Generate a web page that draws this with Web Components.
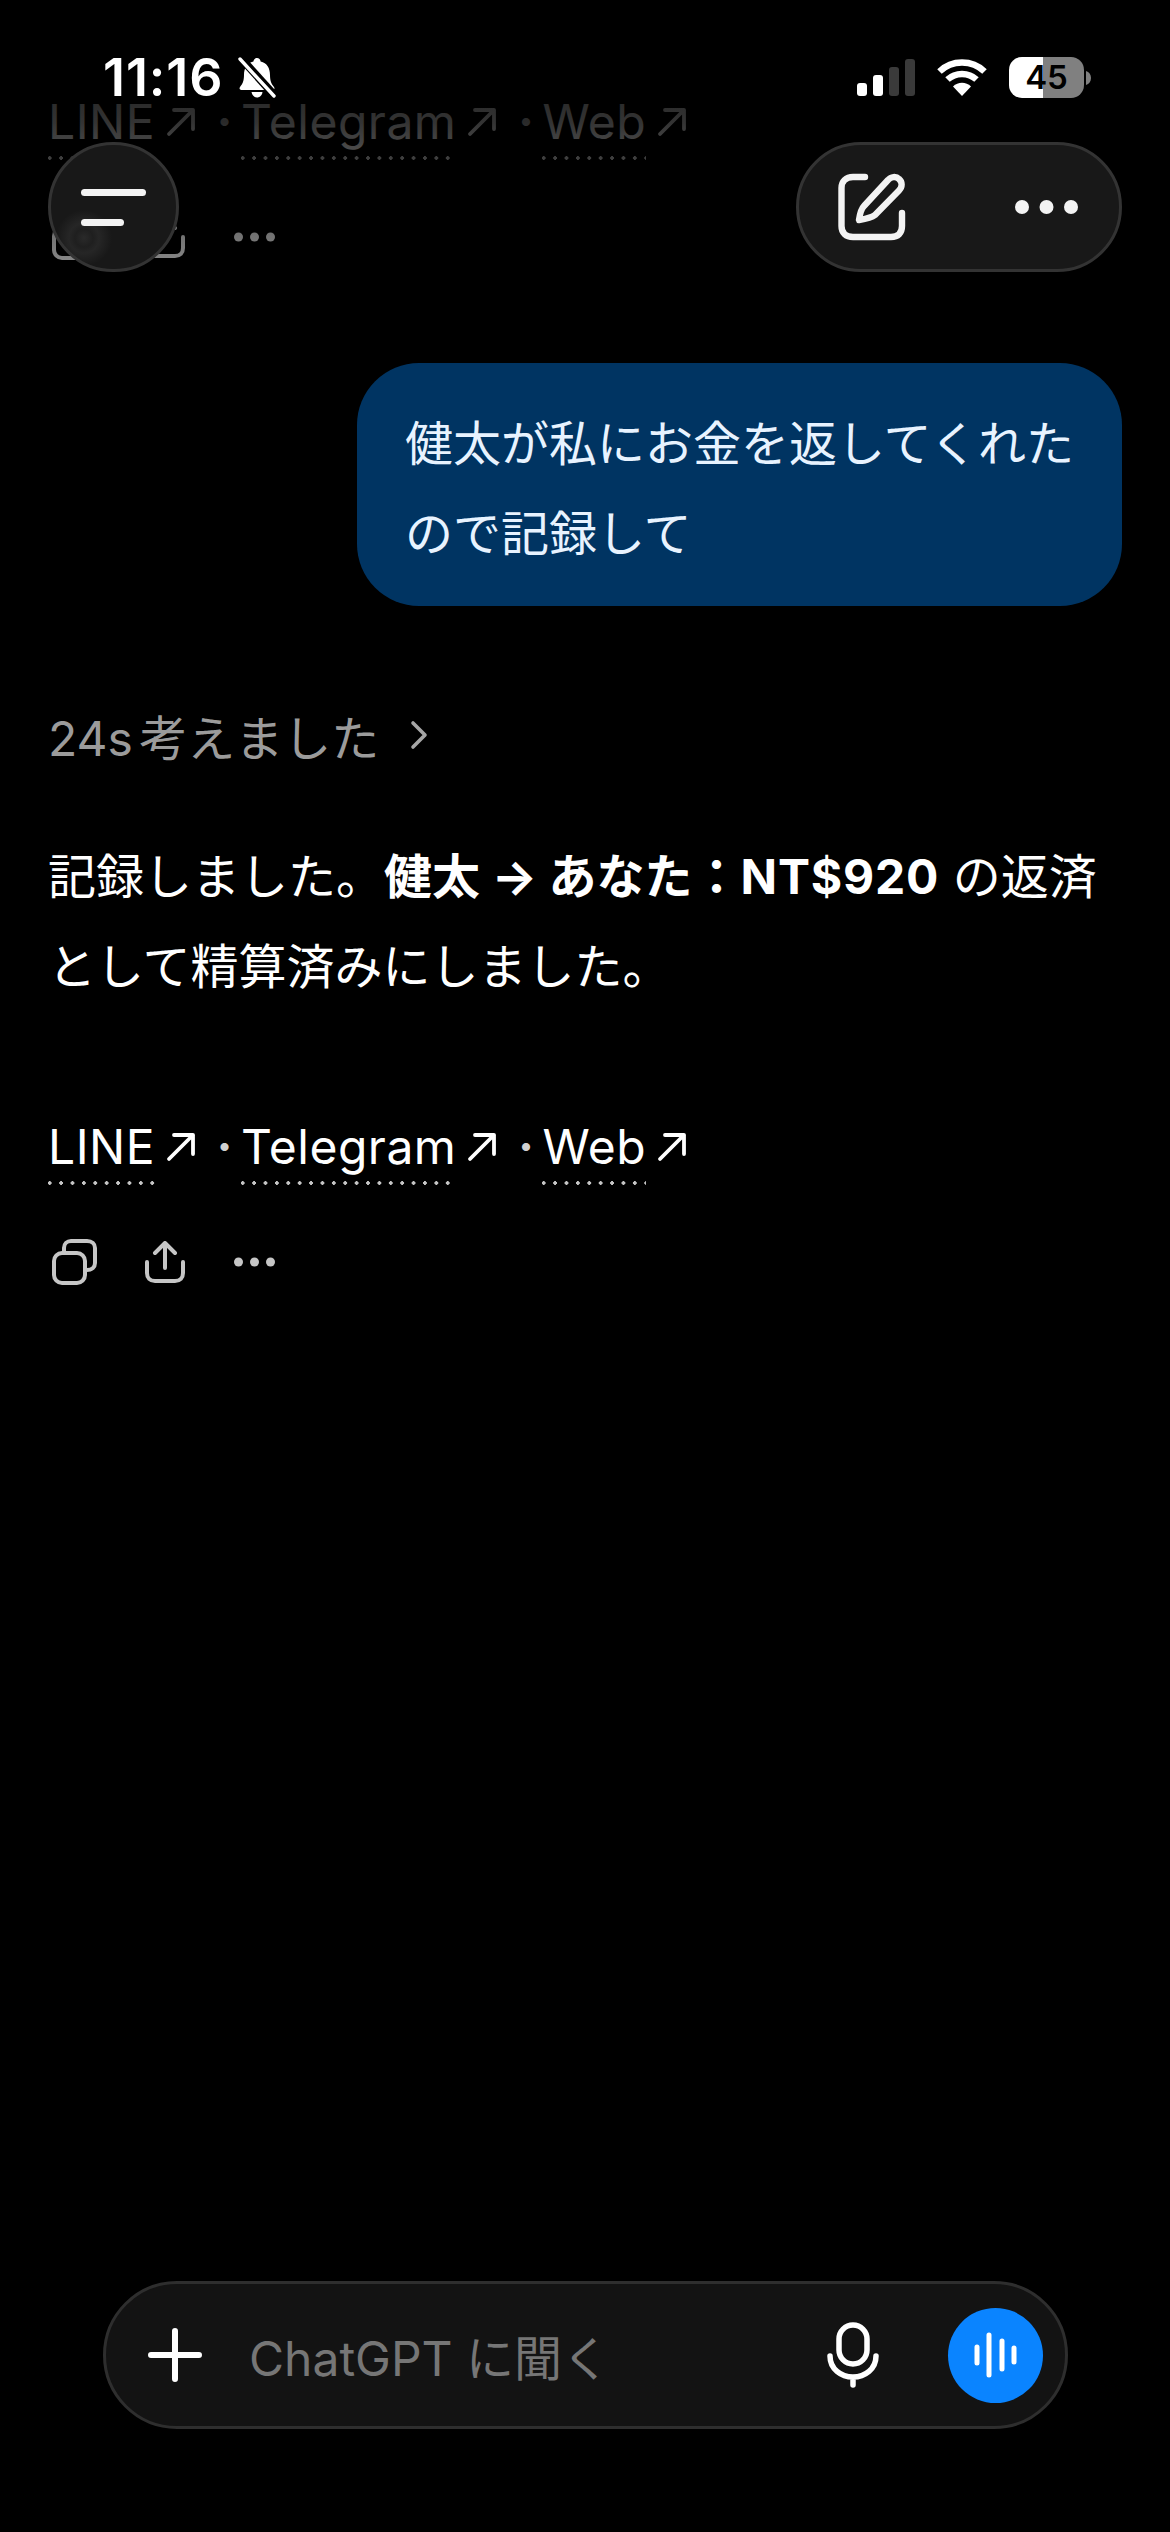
<!DOCTYPE html>
<html lang="ja">
<head>
<meta charset="utf-8">
<title>ChatGPT</title>
<style>
  html, body { margin: 0; background: #000; }
</style>
</head>
<body>
<chat-screen>
  <status-bar slot="overlay"></status-bar>
  <top-nav slot="overlay"></top-nav>

  <!-- previous message, scrolled under the fade -->
  <source-links></source-links>
  <message-actions></message-actions>

  <user-bubble>健太が私にお金を返してくれたので記録して</user-bubble>
  <thought-row>24s 考えました</thought-row>
  <assistant-text>記録しました。<b>健太 → あなた：<span style="letter-spacing:.8px">NT$920</span></b> の返済として精算済みにしました。</assistant-text>
  <source-links spaced></source-links>
  <message-actions></message-actions>

  <chat-composer slot="footer"></chat-composer>
</chat-screen>

<script>
const FONT = 'Inter, "Noto Sans CJK JP", "Noto Sans", sans-serif';

// Page frame: scrolling content, bottom composer, overlays on top
class ChatScreen extends HTMLElement {
  constructor() {
    super();
    this.attachShadow({ mode: 'open' });
    this.shadowRoot.innerHTML = `
      <style>
        :host {
          display: flex;
          flex-direction: column;
          position: relative;
          width: 1170px;
          height: 2532px;
          overflow: hidden;
          background: #000;
          color: #fff;
          font-family: ${FONT};
          font-size: 48px;
        }
        main {
          flex: 1;
          display: flex;
          flex-direction: column;
          padding: 92px 48px 0;
        }
        .fade {
          position: absolute;
          inset: 0 0 auto 0;
          height: 345px;
          pointer-events: none;
          background: linear-gradient(#000 0, rgba(0,0,0,.8) 122px, rgba(0,0,0,.42) 237px, rgba(0,0,0,0) 345px);
        }
      </style>
      <main><slot></slot></main>
      <slot name="footer"></slot>
      <div class="fade"></div>
      <slot name="overlay"></slot>
    `;
  }
}

class StatusBar extends HTMLElement {
  constructor() {
    super();
    this.attachShadow({ mode: 'open' });
    this.shadowRoot.innerHTML = `
      <style>
        :host {
          position: absolute;
          top: 57px;
          left: 0;
          right: 0;
          height: 41px;
          display: flex;
          align-items: center;
          padding: 0 79px 0 103px;
          color: #fff;
        }
        .time { font: 600 52px/41px Inter, sans-serif; letter-spacing: .9px; }
        svg { display: block; }
        .bell { margin-left: 14px; }
        .right { margin-left: auto; display: flex; align-items: center; }
        .wifi { margin-left: 22px; }
        .battery {
          margin-left: 22px;
          width: 75px;
          height: 41px;
          border-radius: 13px;
          background: linear-gradient(90deg, #fff 34px, #808080 34px);
          color: #000;
          font: 600 33px/41px Inter, sans-serif;
          text-align: center;
        }
        .tip { margin-left: 2px; }
      </style>
      <span class="time">11:16</span>
      <svg class="bell" width="40" height="41" viewBox="0 0 40 41">
        <path fill="#fff" d="M20 1c2 0 3.400 1.500 3.600 3.500C30 6 33 11 33 18c0 6 1.500 9 4 12 1 1.300.3 3-1.500 3H4.500C2.700 33 2 31.300 3 30c2.500-3 4-6 4-12C7 11 10 6 16.400 4.500 16.600 2.500 18 1 20 1z"/>
        <path fill="#fff" d="M14.500 35h11c-.5 3.300-2.800 5.500-5.500 5.500s-5-2.200-5.500-5.500z"/>
        <path stroke="#000" stroke-width="8" d="M2 -1L38 39"/>
        <path stroke="#fff" stroke-width="3.400" stroke-linecap="round" d="M3 2L37 39"/>
      </svg>
      <div class="right">
        <svg width="58" height="37" viewBox="0 0 58 37">
          <rect x="0" y="24" width="10" height="13" rx="3" fill="#fff"/>
          <rect x="16" y="16" width="10" height="21" rx="3" fill="#fff"/>
          <rect x="32" y="8" width="10" height="29" rx="3" fill="#3a3a3a"/>
          <rect x="48" y="0" width="10" height="37" rx="3" fill="#3a3a3a"/>
        </svg>
        <svg class="wifi" width="50" height="37" viewBox="0 0 50 37">
          <path fill="none" stroke="#fff" stroke-width="6.500" d="M2.500 12.500C15 .5 35 .5 47.500 12.500"/>
          <path fill="none" stroke="#fff" stroke-width="6.500" d="M10.500 20.500C18.500 13 31.500 13 39.500 20.500"/>
          <path fill="#fff" d="M25 37L16 27.500C21 22.500 29 22.500 34 27.500z"/>
        </svg>
        <div class="battery">45</div>
        <svg class="tip" width="5" height="14" viewBox="0 0 5 14"><path fill="#808080" d="M0 0c3 1 5 3.500 5 7s-2 6-5 7z"/></svg>
      </div>
    `;
  }
}

// Floating glass buttons under the status bar
class TopNav extends HTMLElement {
  constructor() {
    super();
    this.attachShadow({ mode: 'open' });
    this.shadowRoot.innerHTML = `
      <style>
        :host {
          position: absolute;
          top: 142px;
          left: 48px;
          right: 48px;
          display: flex;
          justify-content: space-between;
        }
        .glass {
          box-sizing: border-box;
          height: 130px;
          border-radius: 65px;
          background-color: #181818;
          border: 3px solid #333;
          display: flex;
          align-items: center;
        }
        .menu {
          width: 131px;
          flex-direction: column;
          align-items: flex-start;
          justify-content: center;
          gap: 23px;
          padding-left: 30px;
          background-image: radial-gradient(circle at 33px 93px, #2a2a2a 0, #1f1f1f 9px, #262626 15px, #181818 28px);
        }
        .menu i { display: block; height: 7px; border-radius: 4px; background: #f3f3f3; }
        .menu i:first-child { width: 65px; }
        .menu i:last-child { width: 43px; }
        .actions {
          width: 326px;
          padding: 0 41px 0 39px;
          justify-content: space-between;
        }
        svg { display: block; }
      </style>
      <div class="glass menu"><i></i><i></i></div>
      <div class="glass actions">
        <svg width="68" height="68" viewBox="0 0 68 68" fill="none" stroke="#f3f3f3" stroke-width="6.400" stroke-linecap="round" stroke-linejoin="round">
          <path d="M27 4H15C8 4 3.500 8.500 3.500 15V53C3.500 60 8 64 15 64H53C60 64 64 60 64 53V40"/>
          <path d="M21 47C22 40 23 36 26 33L50 7C53 3.500 58 3 61 6C64.500 9 64.500 14 61 17.500L37 42C33 45 27 46 21 47Z"/>
        </svg>
        <svg width="63" height="14" viewBox="0 0 63 14" fill="#f3f3f3">
          <circle cx="7" cy="7" r="7"/><circle cx="31.500" cy="7" r="7"/><circle cx="56" cy="7" r="7"/>
        </svg>
      </div>
    `;
  }
}

class UserBubble extends HTMLElement {
  constructor() {
    super();
    this.attachShadow({ mode: 'open' });
    this.shadowRoot.innerHTML = `
      <style>
        :host {
          display: block;
          box-sizing: border-box;
          align-self: flex-end;
          width: 765px;
          margin-top: 103px;
          padding: 36px 44px 27px 48px;
          border-radius: 62px;
          background: #003462;
          color: #e8f3ff;
          line-height: 90px;
        }
      </style>
      <slot></slot>
    `;
  }
}

class ThoughtRow extends HTMLElement {
  constructor() {
    super();
    this.attachShadow({ mode: 'open' });
    this.shadowRoot.innerHTML = `
      <style>
        :host {
          display: flex;
          align-items: center;
          margin-top: 99px;
          height: 60px;
          color: #9b9b9b;
          word-spacing: -7px;
        }
        svg { margin-left: 30px; }
      </style>
      <slot></slot>
      <svg width="20" height="30" viewBox="0 0 20 30" fill="none" stroke="#a6a6a6" stroke-width="3.600" stroke-linecap="round" stroke-linejoin="round">
        <path d="M4 3L16 15L4 27"/>
      </svg>
    `;
  }
}

class AssistantText extends HTMLElement {
  constructor() {
    super();
    this.attachShadow({ mode: 'open' });
    this.shadowRoot.innerHTML = `
      <style>
        :host { display: block; margin-top: 67px; line-height: 90px; color: #fff; }
        ::slotted(b) { font-weight: 700; }
      </style>
      <slot></slot>
    `;
  }
}

// Row of source links with a dotted underline
class SourceLinks extends HTMLElement {
  constructor() {
    super();
    this.attachShadow({ mode: 'open' });
    const arrow = `<svg width="30" height="30" viewBox="0 0 30 30" fill="none" stroke="#fff" stroke-width="3.800" stroke-linecap="round" stroke-linejoin="round"><path d="M3 27L27 3M8 3H27V22"/></svg>`;
    this.shadowRoot.innerHTML = `
      <style>
        :host {
          display: flex;
          align-items: flex-start;
          height: 70px;
          line-height: 60px;
          color: #fff;
        }
        :host([spaced]) { margin-top: 105px; }
        .link {
          height: 70px;
          display: flex;
          align-items: center;
          align-self: flex-start;
        }
        .text {
          height: 70px;
          letter-spacing: .5px;
          background: radial-gradient(circle, #c4c4c4 1.700px, transparent 2px) -4px bottom / 11.400px 8px repeat-x;
          box-sizing: border-box;
        }
        svg { margin: -10px 0 0 11px; flex: none; }
        .sep { box-sizing: border-box; width: 45px; padding-left: 12px; text-align: center; font-size: 48px; font-weight: 700; color: #d0d0d0; }
      </style>
      <span class="link"><span class="text">LINE</span>${arrow}</span>
      <span class="sep">·</span>
      <span class="link"><span class="text">Telegram</span>${arrow}</span>
      <span class="sep">·</span>
      <span class="link"><span class="text">Web</span>${arrow}</span>
    `;
  }
}

class MessageActions extends HTMLElement {
  constructor() {
    super();
    this.attachShadow({ mode: 'open' });
    this.shadowRoot.innerHTML = `
      <style>
        :host {
          display: flex;
          align-items: center;
          margin-top: 52px;
          padding-left: 4px;
          height: 46px;
        }
        svg { display: block; flex: none; }
        .share { margin-left: 48px; }
        .more { margin-left: 49px; }
      </style>
      <svg width="45" height="46" viewBox="0 0 45 46" fill="none" stroke="#c6c6c6" stroke-width="4" stroke-linejoin="round">
        <rect x="2" y="14" width="31" height="30" rx="8"/>
        <path d="M12 13V9C12 5 15 2 19 2H35C40 2 43 5 43 9V24C43 28 40 31 35 31H33"/>
      </svg>
      <svg class="share" width="40" height="42" viewBox="0 0 40 42" fill="none" stroke="#c6c6c6" stroke-width="4" stroke-linecap="round" stroke-linejoin="round">
        <path d="M20 27V3M10 12L20 2L30 12"/>
        <path d="M2 21V32C2 37 5 40 10 40H30C35 40 38 37 38 32V21"/>
      </svg>
      <svg class="more" width="41" height="10" viewBox="0 0 41 10" fill="#c6c6c6">
        <circle cx="4.500" cy="5" r="4.500"/><circle cx="20.500" cy="5" r="4.500"/><circle cx="36.500" cy="5" r="4.500"/>
      </svg>
    `;
  }
}

class ChatComposer extends HTMLElement {
  constructor() {
    super();
    this.attachShadow({ mode: 'open' });
    this.shadowRoot.innerHTML = `
      <style>
        :host {
          display: flex;
          align-items: center;
          box-sizing: border-box;
          width: 965px;
          height: 148px;
          margin: 0 0 103px 103px;
          padding: 0 22px 0 42px;
          border-radius: 74px;
          background: #131313;
          border: 3px solid #2e2e2e;
        }
        svg { display: block; flex: none; }
        .hint { margin-left: 47px; flex: 1; color: #767676; font-size: 48px; }
        .voice {
          width: 95px;
          height: 95px;
          margin-left: 69px;
          border-radius: 50%;
          background: #0a84ff;
          display: flex;
          align-items: center;
          justify-content: center;
        }
      </style>
      <svg width="54" height="54" viewBox="0 0 54 54" stroke="#fff" stroke-width="6" stroke-linecap="round">
        <path d="M27 3V51M3 27H51"/>
      </svg>
      <span class="hint">ChatGPT に聞く</span>
      <svg width="52" height="66" viewBox="0 0 52 66" fill="none" stroke="#fff" stroke-width="5.500" stroke-linecap="round">
        <rect x="12" y="3" width="28" height="39" rx="14"/>
        <path d="M3 34C3 47 14 55 26 55C38 55 49 47 49 34M26 55V63"/>
      </svg>
      <div class="voice">
        <svg width="43" height="46" viewBox="0 0 43 46" stroke="#fff" stroke-width="5" stroke-linecap="round">
          <path d="M3 15V31M15 3V43M28 9V37M40 16V30"/>
        </svg>
      </div>
    `;
  }
}

customElements.define('chat-screen', ChatScreen);
customElements.define('status-bar', StatusBar);
customElements.define('top-nav', TopNav);
customElements.define('user-bubble', UserBubble);
customElements.define('thought-row', ThoughtRow);
customElements.define('assistant-text', AssistantText);
customElements.define('source-links', SourceLinks);
customElements.define('message-actions', MessageActions);
customElements.define('chat-composer', ChatComposer);
</script>
</body>
</html>
